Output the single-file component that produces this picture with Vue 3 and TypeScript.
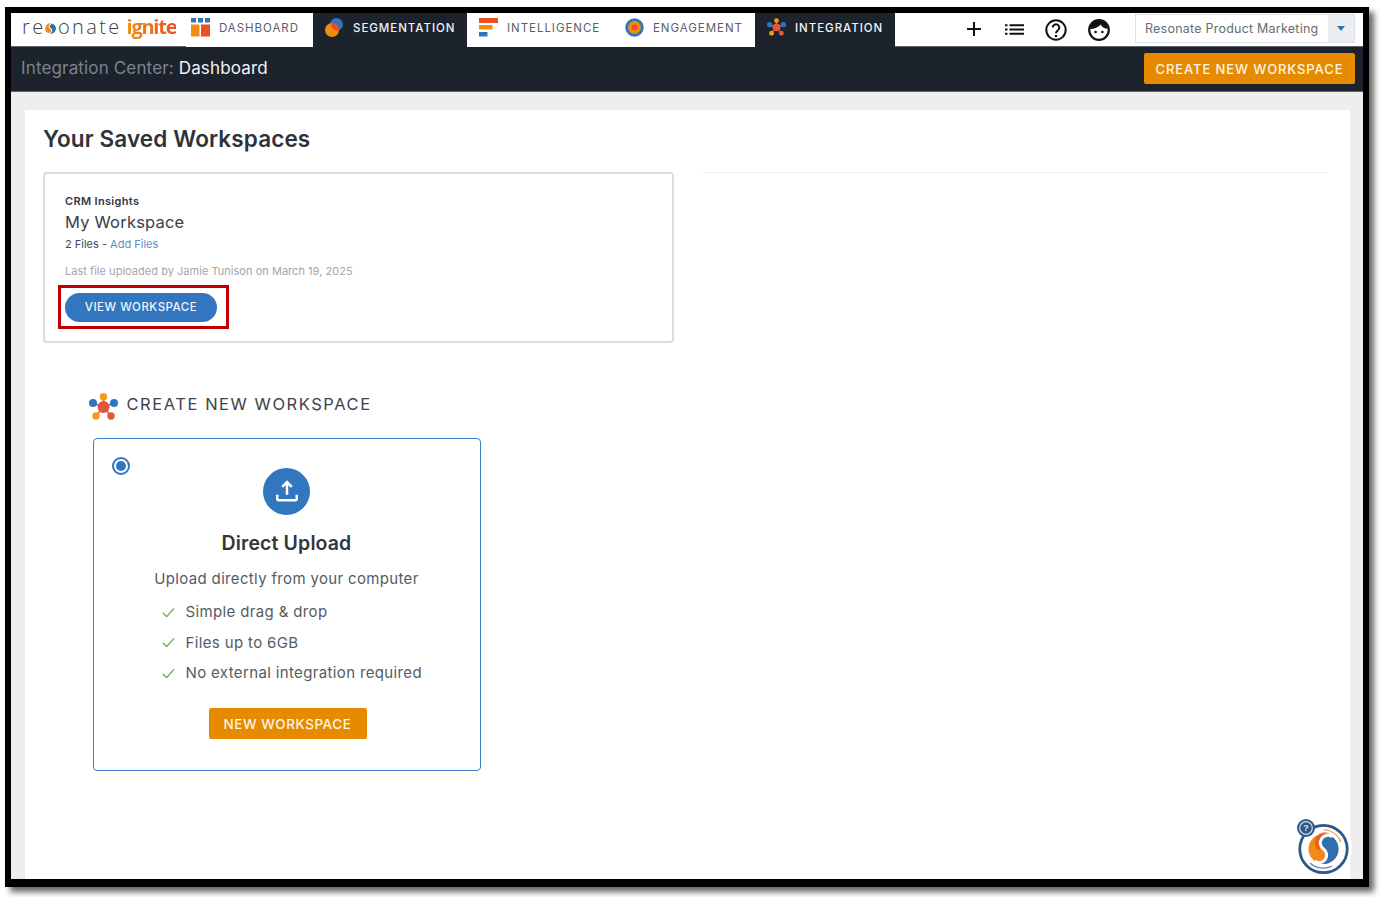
<script setup lang="ts">
interface NavItem { label: string; icon: string; dark: boolean; width: number }
const navItems: NavItem[] = [
  { label: 'DASHBOARD', icon: 'dash', dark: false, width: 127 },
  { label: 'SEGMENTATION', icon: 'seg', dark: true, width: 154 },
  { label: 'INTELLIGENCE', icon: 'intel', dark: false, width: 146 },
  { label: 'ENGAGEMENT', icon: 'eng', dark: false, width: 142 },
  { label: 'INTEGRATION', icon: 'integ', dark: true, width: 140 },
]
const features: string[] = ['Simple drag & drop', 'Files up to 6GB', 'No external integration required']
</script>

<template>
  <div class="frame">
    <header class="topnav">
      <div class="logo">
        <span class="logo-res">re</span>
        <svg class="logo-s" viewBox="0 0 12 12" width="11" height="11">
          <g transform="rotate(35 6 6)">
            <circle cx="6" cy="6" r="5.800" fill="#f08a1c" />
            <path d="M6 .2A5.800 5.800 0 0 1 6 11.800 2.900 2.900 0 0 0 6 6 2.900 2.900 0 0 1 6 .2Z" fill="#2f6fb5" />
            <path d="M6 .2A2.900 2.900 0 0 0 6 6 2.900 2.900 0 0 1 6 11.800" fill="none" stroke="#fff" stroke-width="1" />
          </g>
        </svg>
        <span class="logo-res">onate</span>
        <span class="logo-ign">ignite</span>
      </div>
      <nav class="tabs">
        <div
          v-for="item in navItems"
          :key="item.label"
          class="tab"
          :class="{ dark: item.dark, first: item.icon === 'dash' }"
          :style="{ width: item.width + 'px' }"
        >
          <svg v-if="item.icon === 'dash'" viewBox="0 0 19 19" width="19" height="19">
            <rect x="0" y="0" width="5" height="4.500" fill="#2f75bd" />
            <rect x="7" y="0" width="5" height="4.500" fill="#2f75bd" />
            <rect x="14" y="0" width="5" height="4.500" fill="#2f75bd" />
            <rect x="0" y="6.500" width="8.500" height="12" fill="#f28c0f" />
            <rect x="10" y="6.500" width="9" height="12" fill="#ea5120" />
          </svg>
          <svg v-else-if="item.icon === 'seg'" viewBox="0 0 19 19" width="19" height="19">
            <circle cx="11.500" cy="6.500" r="6.500" fill="#2f75bd" />
            <circle cx="7" cy="12" r="7" fill="#f28c0f" />
            <path d="M5.600 5.200A6.500 6.500 0 0 1 13.900 12.500 7 7 0 0 1 5.600 5.200Z" fill="#ea5120" />
          </svg>
          <svg v-else-if="item.icon === 'intel'" viewBox="0 0 19 19" width="19" height="19">
            <rect x="0" y="0" width="19" height="5" fill="#ea5120" />
            <rect x="0" y="7" width="13.500" height="4.500" fill="#f28c0f" />
            <rect x="0" y="14" width="8.500" height="4.500" fill="#2f75bd" />
          </svg>
          <svg v-else-if="item.icon === 'eng'" viewBox="0 0 19 19" width="19" height="19">
            <circle cx="9.500" cy="9.500" r="9.200" fill="#2f75bd" />
            <circle cx="9.500" cy="9.500" r="6.400" fill="#f28c0f" />
            <circle cx="9.500" cy="9.500" r="3" fill="#ea5120" />
          </svg>
          <svg v-else viewBox="0 0 29 27" width="19" height="18">
            <g stroke="#e0583c" stroke-width="2">
              <line x1="14.500" y1="14" x2="14.500" y2="4" />
              <line x1="14.500" y1="14" x2="4" y2="10" />
              <line x1="14.500" y1="14" x2="25" y2="10" />
              <line x1="14.500" y1="14" x2="7" y2="23" />
              <line x1="14.500" y1="14" x2="22" y2="23" />
            </g>
            <circle cx="14.500" cy="14" r="6" fill="#e0583c" />
            <circle cx="14.500" cy="3.700" r="3.700" fill="#f39a1c" />
            <circle cx="4" cy="10" r="4" fill="#2f75bd" />
            <circle cx="25" cy="10" r="4" fill="#2f75bd" />
            <circle cx="7" cy="23" r="3.700" fill="#f39a1c" />
            <circle cx="22" cy="23" r="3.700" fill="#e0583c" />
          </svg>
          <span class="tab-label">{{ item.label }}</span>
        </div>
      </nav>
      <div class="tools">
        <svg class="tool-plus" viewBox="0 0 14 14" width="14" height="14">
          <path d="M7 0v14M0 7h14" stroke="#111" stroke-width="2" />
        </svg>
        <svg class="tool-list" viewBox="0 0 19 11" width="19" height="11">
          <path d="M0 1.200h2.500M0 5.500h2.500M0 9.800h2.500M4.500 1.200H19M4.500 5.500H19M4.500 9.800H19" stroke="#111" stroke-width="2" />
        </svg>
        <svg class="tool-help" viewBox="0 0 22 22" width="22" height="22">
          <circle cx="11" cy="11" r="9.700" fill="none" stroke="#111" stroke-width="2" />
          <path d="M7.700 8.600a3.300 3.300 0 1 1 5.200 2.700c-1.200.8-1.900 1.400-1.900 2.900" fill="none" stroke="#111" stroke-width="2" />
          <circle cx="11" cy="17" r="1.300" fill="#111" />
        </svg>
        <svg class="tool-face" viewBox="0 0 22 22" width="22" height="22">
          <circle cx="11" cy="11" r="9.800" fill="#fff" stroke="#111" stroke-width="2.200" />
          <path d="M2 10C3 4 7 1 11 1s8 3 9 9c-3-.4-6-2-7.500-4.600C11 8 6 10 2 10Z" fill="#111" />
          <circle cx="7.600" cy="13" r="1.300" fill="#111" />
          <circle cx="14.400" cy="13" r="1.300" fill="#111" />
        </svg>
        <div class="select">
          <span class="select-text">Resonate Product Marketing</span>
          <span class="select-caret"><i class="caret"></i></span>
        </div>
      </div>
    </header>

    <div class="subbar">
      <div class="crumb"><span class="crumb-dim">Integration Center:</span> <span class="crumb-on">Dashboard</span></div>
      <button class="btn-create" type="button">CREATE NEW WORKSPACE</button>
    </div>

    <main class="canvas">
      <section class="panel">
        <h1 class="panel-title">Your Saved Workspaces</h1>
        <div class="saved-row">
          <article class="ws-card">
            <div class="ws-kicker">CRM Insights</div>
            <div class="ws-name">My Workspace</div>
            <div class="ws-files">2 Files - <a class="ws-link">Add Files</a></div>
            <div class="ws-last">Last file uploaded by Jamie Tunison on March 19, 2025</div>
            <button class="btn-view" type="button">VIEW WORKSPACE</button>
          </article>
          <div class="ws-rule"></div>
        </div>

        <div class="new-head">
          <svg viewBox="0 0 29 27" width="29" height="27">
            <g stroke="#e0583c" stroke-width="1.600">
              <line x1="14.500" y1="14" x2="14.500" y2="4" />
              <line x1="14.500" y1="14" x2="4" y2="10" />
              <line x1="14.500" y1="14" x2="25" y2="10" />
              <line x1="14.500" y1="14" x2="7" y2="23" />
              <line x1="14.500" y1="14" x2="22" y2="23" />
            </g>
            <circle cx="14.500" cy="14" r="6" fill="#e0583c" />
            <circle cx="14.500" cy="3.700" r="3.700" fill="#f39a1c" />
            <circle cx="4" cy="10" r="4" fill="#2f75bd" />
            <circle cx="25" cy="10" r="4" fill="#2f75bd" />
            <circle cx="7" cy="23" r="3.700" fill="#f39a1c" />
            <circle cx="22" cy="23" r="3.700" fill="#e0583c" />
          </svg>
          <h2 class="new-title">CREATE NEW WORKSPACE</h2>
        </div>

        <article class="opt-card">
          <span class="radio"><i class="radio-dot"></i></span>
          <div class="opt-circle">
            <svg viewBox="0 0 24 24" width="26" height="26">
              <path d="M12 15.500V4M7.600 8.200 12 3.800l4.400 4.400M3 15.500v3.600c0 .8.6 1.400 1.400 1.400h15.200c.8 0 1.400-.6 1.400-1.400v-3.600" fill="none" stroke="#fff" stroke-width="2.300" />
            </svg>
          </div>
          <h3 class="opt-title">Direct Upload</h3>
          <p class="opt-sub">Upload directly from your computer</p>
          <ul class="opt-list">
            <li v-for="f in features" :key="f" class="opt-item">
              <svg viewBox="0 0 14 12" width="13" height="11">
                <path d="M1 6.500 5 10.500 13 1.500" fill="none" stroke="#5aa845" stroke-width="1.400" />
              </svg>
              <span>{{ f }}</span>
            </li>
          </ul>
          <button class="btn-new" type="button">NEW WORKSPACE</button>
        </article>

        <div class="helper">
          <svg viewBox="0 0 60 60" width="60" height="60">
            <circle cx="30" cy="30" r="30" fill="#fff" />
            <circle cx="31.500" cy="33" r="23.700" fill="#fff" stroke="#2c5a86" stroke-width="2.800" />
            <path d="M31.500 13.500A19.500 19.500 0 0 1 49 26" fill="none" stroke="#f0a24a" stroke-width="1.200" />
            <path d="M18 47a19.500 19.500 0 0 0 22 3" fill="none" stroke="#5f86ad" stroke-width="1.200" />
            <g transform="rotate(35 31.500 33)">
              <circle cx="31.500" cy="33" r="15" fill="#f28a1a" />
              <path d="M31.500 18A15 15 0 0 1 31.500 48 7.500 7.500 0 0 0 31.500 33 7.500 7.500 0 0 1 31.500 18Z" fill="#2f6fb0" />
              <path d="M31.500 18A7.500 7.500 0 0 0 31.500 33" fill="none" stroke="#e4531f" stroke-width="5" transform="translate(-3 1.500)" opacity=".75" />
              <path d="M31.500 18A7.500 7.500 0 0 0 31.500 33 7.500 7.500 0 0 1 31.500 48" fill="none" stroke="#fff" stroke-width="3" />
            </g>
            <circle cx="14" cy="12" r="9" fill="#2c5a86" />
            <circle cx="14" cy="12" r="6.300" fill="none" stroke="#cfdceb" stroke-width="1.200" />
            <text x="14" y="15.200" text-anchor="middle" class="helper-q">?</text>
          </svg>
        </div>
      </section>
    </main>
  </div>
</template>

<style>
html, body { margin: 0; background: #fff; height: 100%; }
#app { height: 100%; overflow: visible; }
</style>

<style scoped>
.frame {
  box-sizing: border-box;
  width: 1364px;
  height: 880px;
  margin: 7px 0 0 5px;
  border: solid #000;
  border-width: 6px 6px 8px 6px;
  box-shadow: 5px 5px 6px rgba(0, 0, 0, .6);
  display: flex;
  flex-direction: column;
  font-family: Inter, "Open Sans", "Liberation Sans", sans-serif;
  color: #33383f;
  overflow: hidden;
  background: #eee;
}
.topnav {
  flex: none;
  display: flex;
  align-items: stretch;
  background: #fff;
  border-bottom: 1px solid #5c636b;
  height: 32.500px;
}
.logo {
  width: 164px;
  padding-left: 11px;
  display: flex;
  align-items: center;
  font-family: "Open Sans", sans-serif;
  flex: none;
}
.logo-res { font-size: 20px; letter-spacing: 2.350px; color: #3d4247; font-weight: 300; margin-top: -5px; }
.logo-s { margin: -2px 1.500px 0 0; }
.logo-ign {
  font-size: 20px;
  font-weight: 700;
  margin: -5px 0 0 5px;
  letter-spacing: -1.250px;
  background: linear-gradient(90deg, #f28c0f, #ea5120);
  -webkit-background-clip: text;
  background-clip: text;
  color: transparent;
}
.tabs { display: flex; align-items: stretch; }
.tab {
  box-sizing: border-box;
  display: flex;
  align-items: center;
  gap: 9px;
  padding-left: 12px;
  margin-bottom: -1px;
  background: #fff;
  color: #59606a;
  font-weight: 400;
}
.tab.first { padding-left: 5px; }
.tab svg { margin-top: -5px; flex: none; }
.tab.dark { background: #1c232c; color: #f0f2f4; font-weight: 500; }
.tab-label { font-size: 11.500px; letter-spacing: .96px; white-space: nowrap; margin-top: -3px; }
.tools { flex: 1; display: flex; align-items: center; min-width: 0; }
.tool-plus { margin-left: 72px; }
.tool-list { margin-left: 24px; }
.tool-help { margin-left: 21px; margin-top: 1px; }
.tool-face { margin-left: 21px; margin-top: 1px; }
.select {
  margin-left: 25px;
  width: 220px;
  height: 29px;
  box-sizing: border-box;
  border: 1px solid #dcdfe3;
  display: flex;
  align-items: stretch;
  margin-top: -2px;
}
.select-text { flex: 1; font-size: 12.500px; letter-spacing: .23px; color: #666c74; line-height: 27px; padding-left: 9px; white-space: nowrap; }
.select-caret { width: 26px; background: #eceef0; display: flex; align-items: center; justify-content: center; }
.caret { width: 0; height: 0; border: 4.500px solid transparent; border-top: 5px solid #2f75bd; border-bottom: 0; }
.subbar {
  height: 44px;
  flex: none;
  background: #1c232c;
  border-bottom: 1px solid #5c636b;
  display: flex;
  align-items: center;
  justify-content: space-between;
  padding: 0 8px 0 10px;
}
.crumb { font-size: 17px; letter-spacing: .15px; margin-top: -2px; }
.crumb-dim { color: #7d848d; }
.crumb-on { color: #f2f4f6; }
.btn-create {
  width: 211px;
  height: 31px;
  border: 0;
  border-radius: 2px;
  background: #e68a00;
  color: #fff5e6;
  font: 500 13px Inter, sans-serif;
  letter-spacing: .9px;
  padding: 0;
}
.canvas { flex: 1; min-height: 0; padding: 18px 13px 0 14px; display: flex; }
.panel {
  flex: 1;
  background: #fff;
  position: relative;
  padding: 14px 22px 0 18px;
  box-sizing: border-box;
}
.panel-title { margin: 0; font-size: 22.500px; line-height: 30px; font-weight: 600; color: #2e333a; letter-spacing: .12px; }
.saved-row { display: flex; margin-top: 18px; }
.ws-card {
  box-sizing: border-box;
  width: 631px;
  height: 171px;
  border: 2px solid #dcdcdc;
  border-radius: 4px;
  padding: 19px 20px 0;
  flex: none;
}
.ws-kicker { font-size: 11px; line-height: 16px; font-weight: 600; color: #33383f; letter-spacing: .33px; }
.ws-name { font-size: 16.500px; line-height: 24px; margin-top: 1px; color: #3b4047; letter-spacing: .2px; }
.ws-files { font-size: 11px; line-height: 16px; margin-top: 2px; color: #444a52; }
.ws-link { color: #5e8fc6; }
.ws-last { font-size: 11px; line-height: 16px; margin-top: 11px; color: #a6a6a6; letter-spacing: .03px; }
.btn-view {
  position: relative;
  display: block;
  width: 152px;
  height: 29px;
  margin-top: 14px;
  border: 0;
  border-radius: 15px;
  background: #3176bf;
  color: #eef4fa;
  font: 500 11.500px Inter, sans-serif;
  letter-spacing: .5px;
  padding: 0;
}
.btn-view::after {
  content: "";
  position: absolute;
  left: -7px;
  top: -8px;
  width: 171px;
  height: 44px;
  box-sizing: border-box;
  border: 3px solid #c00000;
}
.ws-rule { flex: 1; height: 1px; background: #f1f1f1; margin-left: 29px; }
.new-head { display: flex; align-items: center; gap: 9px; margin: 49px 0 0 45.500px; height: 29px; }
.new-title { margin: -4px 0 0; font-size: 16.500px; font-weight: 400; letter-spacing: 1.550px; color: #3d434b; }
.opt-card {
  box-sizing: border-box;
  position: relative;
  width: 388px;
  height: 333px;
  margin: 17px 0 0 49.500px;
  border: 1px solid #3d7fc4;
  border-radius: 4px;
  display: flex;
  flex-direction: column;
  align-items: center;
}
.radio {
  position: absolute;
  left: 18px;
  top: 18px;
  width: 18px;
  height: 18px;
  box-sizing: border-box;
  border: 2px solid #3176bf;
  border-radius: 50%;
  display: flex;
  align-items: center;
  justify-content: center;
}
.radio-dot { width: 10px; height: 10px; border-radius: 50%; background: #3176bf; }
.opt-circle {
  width: 47px;
  height: 47px;
  margin-top: 29px;
  border-radius: 50%;
  background: #3176bf;
  display: flex;
  align-items: center;
  justify-content: center;
}
.opt-title { margin: 15px 0 0; font-size: 19.500px; line-height: 26px; font-weight: 600; color: #31363d; letter-spacing: .12px; }
.opt-sub { margin: 12px 0 0; font-size: 15px; line-height: 22px; color: #555b63; letter-spacing: .34px; }
.opt-list { list-style: none; margin: 11px 0 0; padding: 0 0 0 68px; align-self: stretch; }
.opt-item { display: flex; align-items: center; gap: 11px; height: 22px; margin-bottom: 8.700px; font-size: 15px; letter-spacing: .36px; color: #555b63; }
.opt-item svg { margin-top: 1px; flex: none; }
.btn-new {
  width: 158px;
  height: 31px;
  margin-top: 15.900px;
  margin-left: 2px;
  border: 0;
  border-radius: 2px;
  background: #e68a00;
  color: #fff5e6;
  font: 500 13.500px Inter, sans-serif;
  letter-spacing: .55px;
  padding: 0;
}
.helper { position: absolute; right: -2px; bottom: 3px; width: 60px; height: 60px; }
.helper-q { font: 700 9px "Liberation Sans", sans-serif; fill: #dfe8f2; }
</style>
